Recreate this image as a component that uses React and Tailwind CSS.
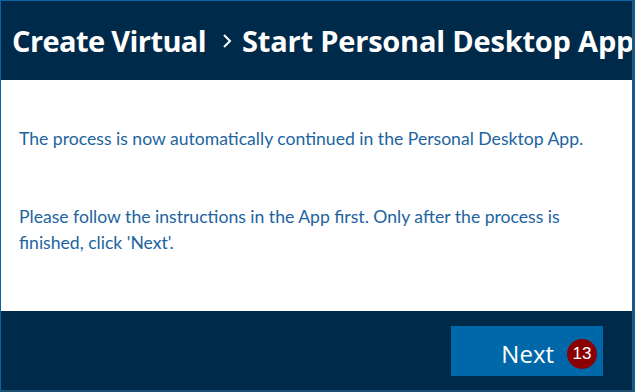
import React from 'react';

const App = () => {
  return (
    <div className="flex h-[392px] w-[635px] flex-col overflow-hidden border-t border-l border-[#0a64a4] border-r-[3px] border-r-[#1a5a88] border-b-2 border-b-[#1d4f72] bg-[#002a4a]">
      {/* Header with breadcrumb */}
      <div className="flex h-[79px] shrink-0 items-center overflow-hidden whitespace-nowrap pl-[11px] font-['Open_Sans',sans-serif] text-[29px] font-bold text-white">
        <span className="tracking-[-0.6px]">Create Virtual</span>
        <span className="ml-[15px] mr-[9px] flex items-center">
          <svg width="12" height="18" viewBox="0 0 12 18" fill="none">
            <path d="M3 3 L9 9 L3 15" stroke="white" strokeWidth="2" />
          </svg>
        </span>
        <span className="tracking-[-0.2px]">Start Personal Desktop App</span>
      </div>

      {/* Body */}
      <div className="h-[231px] shrink-0 bg-white px-[18px] pt-[46px] font-['Lato',sans-serif] text-[17.6px] leading-[26px] text-[#1d64a0]">
        <p>The process is now automatically continued in the Personal Desktop App.</p>
        <p className="mt-[52px] max-w-[580px]">
          Please follow the instructions in the App first. Only after the process is finished, click 'Next'.
        </p>
      </div>

      {/* Footer */}
      <div className="flex flex-1 items-start justify-end pt-[15px] pr-[29px]">
        <button className="relative flex h-[50px] w-[152px] items-center justify-end bg-[#0068a8] pr-[49px] pt-[5px] font-['Open_Sans',sans-serif] text-[24px] text-white">
          Next
          <span className="absolute right-[6px] top-[13px] flex h-[30px] w-[30px] items-center justify-center rounded-full bg-[#8a0000] font-['Liberation_Sans',sans-serif] text-[17px] text-white">
            13
          </span>
        </button>
      </div>
    </div>
  );
};

export default App;
